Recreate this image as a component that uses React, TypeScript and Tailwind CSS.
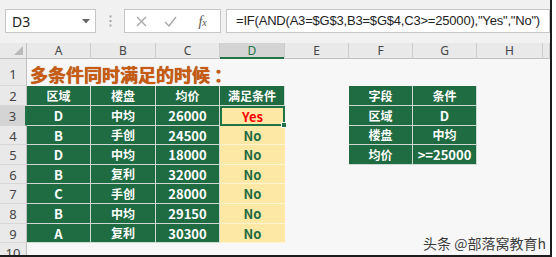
import React from 'react';

const cjk = { fontFamily: '"Noto Sans CJK SC", sans-serif' };
const ui = { fontFamily: '"Noto Sans", "Noto Sans CJK SC", sans-serif' };

const letters = ['A', 'B', 'C', 'D', 'E', 'F', 'G', 'H', ''];

const data = [
  ['D', '中均', '26000', 'Yes'],
  ['B', '手创', '24500', 'No'],
  ['D', '中均', '18000', 'No'],
  ['B', '复利', '32000', 'No'],
  ['C', '手创', '28000', 'No'],
  ['B', '中均', '29150', 'No'],
  ['A', '复利', '30300', 'No'],
];

const rules = [
  ['字段', '条件'],
  ['区域', 'D'],
  ['楼盘', '中均'],
  ['均价', '>=25000'],
];

const RowHead: React.FC<{ n: number; active?: boolean }> = ({ n, active }) => (
  <div
    className={`flex items-center justify-center text-[13px] leading-none pt-[2px] text-[#444] border-b border-[#d6d6d6] ${
      active ? 'bg-[#d4d4d4] border-r-2 border-r-[#217346]' : 'bg-[#e9e9e9] border-r border-r-[#c0c0c0]'
    }`}
    style={ui}
  >
    {n}
  </div>
);

const Green: React.FC<{ children: string }> = ({ children }) => {
  // latin text (letters, numbers) reads a bit larger than the CJK labels
  const latin = /^[\x00-\x7f]+$/.test(children);
  return (
    <div
      className={`flex items-center justify-center bg-[#1f6b42] border-r border-b border-[#cfd9d3] text-white font-bold leading-none ${
        latin ? 'text-[13px]' : 'text-[12px]'
      }`}
      style={cjk}
    >
      {children}
    </div>
  );
};

const Empty: React.FC = () => <div />;

export default function App() {
  const rows: React.ReactNode[] = [];

  for (let r = 2; r <= 9; r++) {
    const cells: React.ReactNode[] = [<RowHead key="h" n={r} active={r === 3} />];
    if (r === 2) {
      ['区域', '楼盘', '均价', '满足条件'].forEach((t) => cells.push(<Green key={t}>{t}</Green>));
    } else {
      const d = data[r - 3];
      cells.push(<Green key="a">{d[0]}</Green>);
      cells.push(<Green key="b">{d[1]}</Green>);
      cells.push(<Green key="c">{d[2]}</Green>);
      if (r === 3) {
        cells.push(
          <div
            key="d"
            className="relative flex items-center justify-center bg-[#fde8a5] border-2 border-[#217346] text-[13px] leading-none font-bold text-[#ff0000]"
            style={cjk}
          >
            {d[3]}
            <span className="absolute -right-[4px] -bottom-[4px] w-[6px] h-[6px] bg-[#217346] border border-white" />
          </div>
        );
      } else {
        cells.push(
          <div
            key="d"
            className="flex items-center justify-center bg-[#fde8a5] border-b border-[#fff4d2] text-[13px] leading-none font-bold text-[#1f6b42]"
            style={cjk}
          >
            {d[3]}
          </div>
        );
      }
    }
    cells.push(<Empty key="e" />);
    if (r <= 5) {
      const s = rules[r - 2];
      cells.push(<Green key="f">{s[0]}</Green>);
      cells.push(<Green key="g">{s[1]}</Green>);
    } else {
      cells.push(<Empty key="f" />);
      cells.push(<Empty key="g" />);
    }
    cells.push(<Empty key="h2" />);
    cells.push(<Empty key="i" />);
    rows.push(<React.Fragment key={r}>{cells}</React.Fragment>);
  }

  return (
    <div className="w-[556px] h-[257px] bg-white overflow-hidden">
      <div className="relative w-[552px] h-[257px] flex flex-col overflow-hidden bg-[#f1f1f1] border-r-2 border-b-2 border-[#1c1c1c]">
        {/* formula bar */}
        <div className="h-[43px] shrink-0 flex items-start pt-[9px]">
          <div className="ml-[5px] w-[91px] h-[24px] bg-white border border-[#c6c6c6] flex items-center justify-between pl-[6px] pr-[5px]">
            <span className="text-[14px] text-[#222]" style={ui}>D3</span>
            <svg width="8" height="5" viewBox="0 0 8 5">
              <polygon points="0,0 8,0 4,4.5" fill="#666" />
            </svg>
          </div>
          <div className="w-[28px] h-[24px] flex items-center justify-center">
            <svg width="3" height="12" viewBox="0 0 3 12">
              <rect x="0.5" y="0.5" width="2" height="2" fill="#a8a8a8" />
              <rect x="0.5" y="5" width="2" height="2" fill="#a8a8a8" />
              <rect x="0.5" y="9.5" width="2" height="2" fill="#a8a8a8" />
            </svg>
          </div>
          <div className="w-[97px] h-[24px] bg-white border border-[#c6c6c6] flex items-center pl-[2px]">
            <div className="w-[30px] flex justify-center">
              <svg width="11" height="11" viewBox="0 0 11 11">
                <path d="M1 1 L10 10 M10 1 L1 10" stroke="#a6a6a6" strokeWidth="1.3" />
              </svg>
            </div>
            <div className="w-[30px] flex justify-center">
              <svg width="13" height="11" viewBox="0 0 13 11">
                <path d="M1 6 L5 10 L12 1" stroke="#a6a6a6" strokeWidth="1.3" fill="none" />
              </svg>
            </div>
            <div className="w-[36px] flex justify-center">
              <span className="italic text-[14px] text-[#555]" style={{ fontFamily: '"Liberation Serif", serif' }}>
                f<span className="text-[10px]">x</span>
              </span>
            </div>
          </div>
          <div
            className="ml-[5px] flex-1 h-[24px] bg-white border border-[#c6c6c6] flex items-center pl-[9px] text-[13px] tracking-[-0.2px] text-[#222] whitespace-nowrap overflow-hidden"
            style={{ fontFamily: '"Liberation Sans", sans-serif' }}
          >
            =IF(AND(A3=$G$3,B3=$G$4,C3&gt;=25000),"Yes","No")
          </div>
        </div>

        {/* sheet */}
        <div className="flex-1 grid grid-cols-[27px_64px_65px_64px_65px_64px_64px_64px_66px_1fr] grid-rows-[16px_27px_20px_20px_19px_20px_19px_20px_20px_19px_20px] bg-[#f7f7f7] overflow-hidden">
          {/* column headers */}
          <div className="relative bg-[#e9e9e9] border-r border-b border-[#c0c0c0]">
            <svg className="absolute right-[3px] bottom-[3px]" width="9" height="9" viewBox="0 0 9 9">
              <polygon points="9,0 9,9 0,9" fill="#b9b9b9" />
            </svg>
          </div>
          {letters.map((l, i) => (
            <div
              key={i}
              className={`flex items-center justify-center text-[12px] leading-none border-r border-r-[#cdcdcd] ${
                l === 'D'
                  ? 'bg-[#d4d4d4] text-[#217346] shadow-[inset_0_-2px_0_#217346]'
                  : 'bg-[#e9e9e9] text-[#444] shadow-[inset_0_-1px_0_#c0c0c0]'
              }`}
              style={ui}
            >
              {l}
            </div>
          ))}

          {/* row 1: title */}
          <div className="flex items-end justify-center pb-[4px] text-[13px] leading-none text-[#444] bg-[#e9e9e9] border-r border-r-[#c0c0c0] border-b border-[#d6d6d6]" style={ui}>
            1
          </div>
          <div className="col-span-9 flex items-end pl-[3px] pb-[3px] whitespace-nowrap">
            <span
              className="text-[18px] font-bold leading-none text-[#c95b12]"
              style={{ ...cjk, textShadow: '0 0 1px #8a3a08' }}
            >
              多条件同时满足的时候<span className="ml-[4px]">：</span>
            </span>
          </div>

          {rows}

          {/* row 10 */}
          <RowHead n={10} />
          <div className="col-span-9" />
        </div>

        {/* watermark */}
        <div
          className="absolute left-[423px] top-[233px] text-[14px] text-[#3a3a3a] whitespace-nowrap"
          style={{ ...cjk, textShadow: '0 0 2px #fff, 0 0 2px #fff' }}
        >
          头条 @部落窝教育h
        </div>
      </div>
    </div>
  );
}
